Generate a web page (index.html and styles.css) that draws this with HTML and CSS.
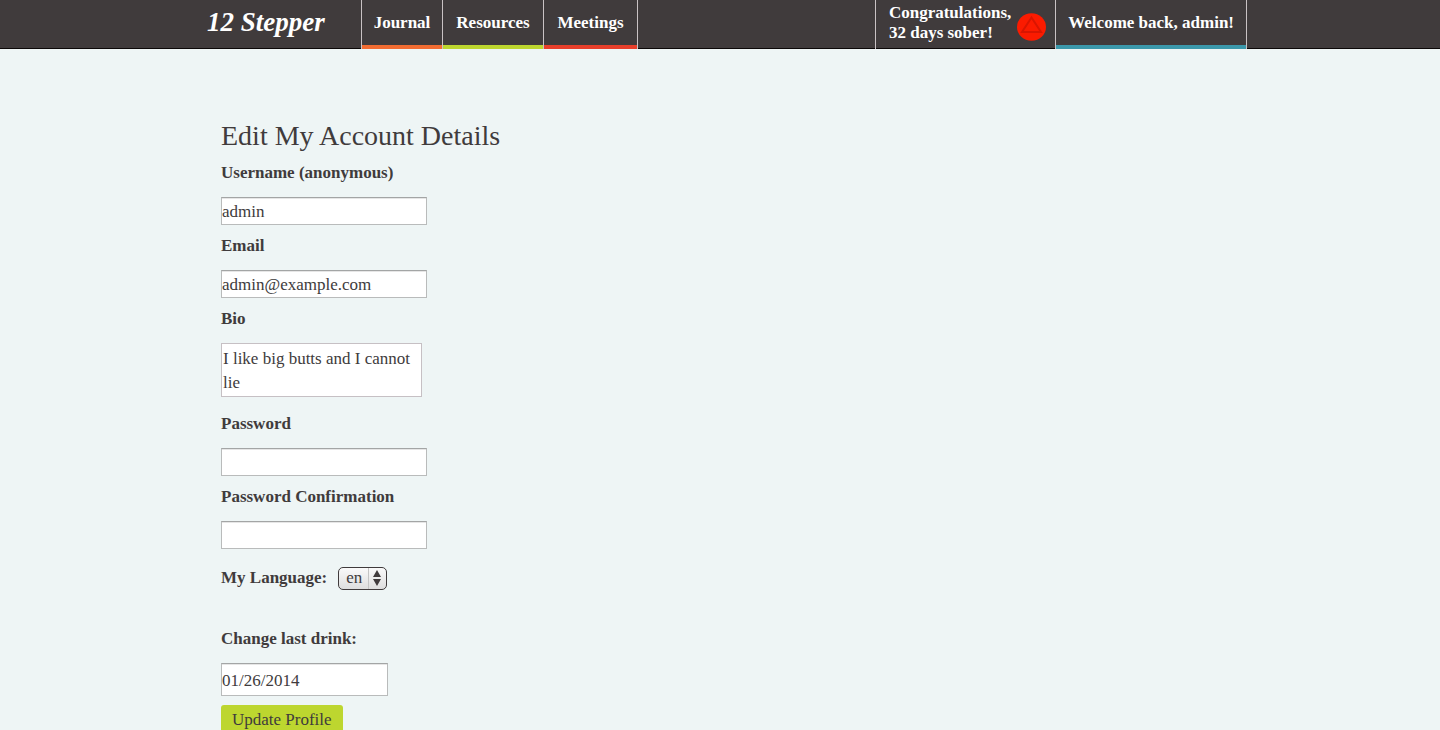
FILE: index.html
```html
<!DOCTYPE html>
<html lang="en">
<head>
<meta charset="utf-8">
<title>12 Stepper</title>
<link rel="stylesheet" href="styles.css">
</head>
<body>
<header class="topbar">
  <div class="topbar-inner">
    <a class="logo" href="#">12 Stepper</a>
    <nav class="nav">
      <a class="nav-link journal" href="#">Journal</a>
      <a class="nav-link resources" href="#">Resources</a>
      <a class="nav-link meetings" href="#">Meetings</a>
    </nav>
    <div class="sobriety">
      <span>Congratulations,<br>32 days sober!</span>
      <svg class="chip" viewBox="0 0 29 28" aria-hidden="true">
        <ellipse cx="14.5" cy="14" rx="14.5" ry="13.8" fill="#fb1b00"/>
        <path d="M14.5 4.5 L24 19 H5 Z" fill="none" stroke="#d91500" stroke-width="2"/>
      </svg>
    </div>
    <a class="nav-link welcome" href="#">Welcome back, admin!</a>
  </div>
</header>
<main class="content">
  <h1 class="title">Edit My Account Details</h1>
  <form class="form">
    <label class="label" for="username">Username (anonymous)</label>
    <input class="field" id="username" type="text" value="admin">
    <label class="label" for="email">Email</label>
    <input class="field" id="email" type="email" value="admin@example.com">
    <label class="label" for="bio">Bio</label>
    <textarea class="field bio" id="bio">I like big butts and I cannot lie</textarea>
    <label class="label" for="password">Password</label>
    <input class="field" id="password" type="password">
    <label class="label" for="confirmation">Password Confirmation</label>
    <input class="field" id="confirmation" type="password">
    <div class="language">
      <label class="label inline" for="language">My Language:</label>
      <span class="picker">
        <select class="select" id="language"><option>en</option></select>
        <svg class="arrows" viewBox="0 0 8 16" aria-hidden="true"><path d="M4 0 L8 7 H0 Z M0 9 H8 L4 16 Z" fill="#403b3c"/></svg>
      </span>
    </div>
    <label class="label" for="drink">Change last drink:</label>
    <input class="field date" id="drink" type="text" value="01/26/2014">
    <button class="submit" type="submit">Update Profile</button>
  </form>
</main>
</body>
</html>
```
FILE: styles.css
```css
* { box-sizing: border-box; }
body {
  margin: 0;
  background: #eef5f5;
  color: #403b3c;
  font: 17px/24px "Liberation Serif", "Times New Roman", serif;
}
a { color: inherit; text-decoration: none; }
.topbar {
  background: #403b3c;
  box-shadow: inset 0 -1px #0c0808;
  color: #fff;
  font-weight: bold;
}
.topbar-inner {
  display: flex;
  height: 49px;
  max-width: 1054px;
  margin: 0 auto;
}
.logo {
  width: 168px;
  padding-left: 14px;
  font-size: 27px;
  font-style: italic;
  line-height: 44px;
  white-space: nowrap;
}
.nav { display: grid; grid-template-columns: 81px 101px 95px; }
.nav-link {
  border-left: 1px solid #c9c2c4;
  line-height: 45px;
  text-align: center;
  box-shadow: inset 0 -4px var(--accent);
  white-space: nowrap;
}
.journal { --accent: #f26c32; }
.resources { --accent: #bdd62f; }
.meetings { --accent: #e83f2b; }
.welcome { --accent: #3b98ab; padding: 0 12px; }
.meetings, .welcome { border-right: 1px solid #c9c2c4; }
.sobriety {
  display: flex;
  gap: 6px;
  margin-left: auto;
  padding: 3px 9px 0 13px;
  border-left: 1px solid #c9c2c4;
  line-height: 20px;
  white-space: nowrap;
}
.chip { width: 29px; height: 28px; margin-top: 10px; }
.content {
  max-width: 1054px;
  margin: 0 auto;
  padding: 70px 28px 20px;
}
.title { margin: 0; font-size: 28px; font-weight: normal; line-height: 34px; }
.form { display: flex; flex-direction: column; align-items: flex-start; }
.label { padding: 8px 0 12px; font-weight: bold; }
.field {
  width: 206px;
  height: 28px;
  padding: 2px 0 0;
  border: 1px solid #b9bbbb;
  border-top-color: #a3a5a5;
  border-radius: 0;
  background: #fff;
  box-shadow: inset 0 1px #e6e6e6;
  color: inherit;
  font: inherit;
  margin-bottom: 1px;
}
.bio {
  width: 201px;
  height: 54px;
  margin-bottom: 7px;
  padding: 3px 1px 1px;
  border-color: #c6c0c4;
  box-shadow: none;
  resize: none;
  overflow: hidden;
}
.language {
  display: flex;
  align-items: center;
  gap: 11px;
  margin: 16px 0 29px;
}
.inline { padding: 0; }
.picker { display: grid; align-items: center; }
.select, .arrows { grid-area: 1 / 1; }
.select {
  appearance: none;
  width: 49px;
  height: 23px;
  padding: 0 7px;
  border: 1px solid #403b3c;
  border-radius: 5px;
  background: linear-gradient(90deg, transparent 29px, #c4c4c4 29px, #c4c4c4 30px, transparent 30px), linear-gradient(#fafafa, #dedede);
  color: inherit;
  font: inherit;
  line-height: 20px;
}
.arrows { width: 8px; height: 16px; margin-right: 6px; justify-self: end; pointer-events: none; }
.date { width: 167px; height: 33px; margin-bottom: 9px; }
.submit {
  height: 29px;
  padding: 0 11px;
  border: 0;
  border-radius: 3px;
  background: #bdd62f;
  color: inherit;
  font: inherit;
}
```
